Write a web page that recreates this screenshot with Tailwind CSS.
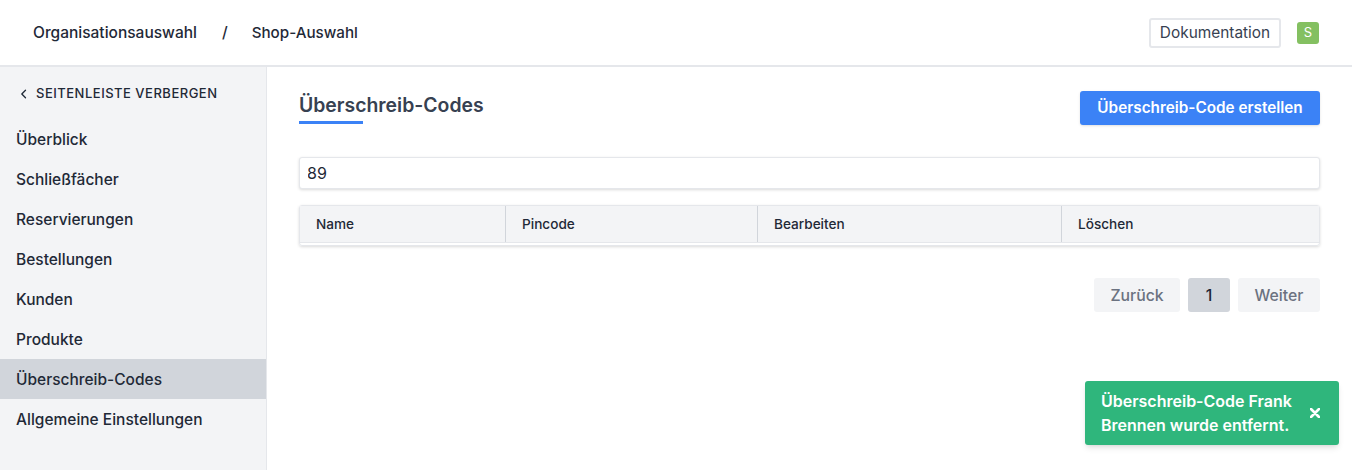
<!DOCTYPE html>
<html lang="de">
  <head>
    <meta charset="UTF-8" />
    <meta name="viewport" content="width=device-width, initial-scale=1.0" />
    <title>Überschreib-Codes</title>
    <script src="https://cdn.jsdelivr.net/npm/@tailwindcss/browser@4"></script>
  </head>
  <body class="bg-white font-['Inter',sans-serif] text-[#1f2937] overflow-hidden">
    <div class="relative w-[1352px] h-[470px] overflow-hidden">
      <header class="h-[67px] border-b-2 border-[#e5e7eb] flex items-center justify-between pl-[33px] pr-[33px]">
        <nav class="flex items-center pt-[1px] text-[15.5px] font-medium text-[#1f2937]">
          <a>Organisationsauswahl</a>
          <span class="ml-[25px] mr-[24px]">/</span>
          <a class="text-[15.2px]">Shop-Auswahl</a>
        </nav>
        <div class="flex items-center">
          <button class="h-[30px] w-[132px] border-2 border-[#e5e7eb] rounded-[3px] text-[15.4px] text-[#374151] flex items-center justify-center">Dokumentation</button>
          <div class="ml-[16px] w-[22px] h-[22px] rounded-[3px] bg-[#84c061] text-white text-[13px] flex items-center justify-center">S</div>
        </div>
      </header>
      <div class="flex h-[403px]">
        <aside class="w-[267px] shrink-0 bg-[#f3f4f6] border-r border-[#e5e7eb]">
          <button class="flex items-center h-[52px] pl-[17px] pt-[1px] text-[13px] font-medium tracking-[0.5px] text-[#1f2937]">
            <svg class="w-[14px] h-[14px] mr-[5px]" viewBox="0 0 14 14" fill="none" stroke="currentColor" stroke-width="1.3" stroke-linecap="round" stroke-linejoin="round"><path d="M8.5 3.2 4.8 7l3.7 3.8" /></svg>
            SEITENLEISTE VERBERGEN
          </button>
          <ul class="text-[15.5px] font-medium text-[#1f2937]">
            <li class="h-[40px] pl-4 pt-[1px] flex items-center">Überblick</li>
            <li class="h-[40px] pl-4 pt-[1px] flex items-center">Schließfächer</li>
            <li class="h-[40px] pl-4 pt-[1px] flex items-center">Reservierungen</li>
            <li class="h-[40px] pl-4 pt-[1px] flex items-center">Bestellungen</li>
            <li class="h-[40px] pl-4 pt-[1px] flex items-center">Kunden</li>
            <li class="h-[40px] pl-4 pt-[1px] flex items-center">Produkte</li>
            <li class="h-[40px] pl-4 pt-[1px] flex items-center bg-[#d1d5db]">Überschreib-Codes</li>
            <li class="h-[40px] pl-4 pt-[1px] flex items-center">Allgemeine Einstellungen</li>
          </ul>
        </aside>
        <main class="flex-1 pl-[32px] pr-[32px]">
          <div class="flex items-start justify-between pt-[24px]">
            <h1 class="text-[19.4px] leading-[29px] font-semibold text-[#374151] pb-[3px] relative">
              Überschreib-Codes
              <span class="absolute left-0 bottom-[-1px] w-[64px] h-[3px] bg-[#3b82f6]"></span>
            </h1>
            <button class="h-[34px] w-[240px] pt-[1px] bg-[#3b82f6] text-white text-[15.3px] font-semibold rounded-[3px] shadow-sm">Überschreib-Code erstellen</button>
          </div>
          <input value="89" class="block mt-[32px] w-full h-[32px] px-[8px] bg-white border border-[#e5e7eb] rounded-[3px] shadow-[0_1px_3px_rgba(0,0,0,0.15)] text-[16px] text-[#1f2937] indent-[-1px]" />
          <div class="mt-[16px] border border-[#e5e7eb] rounded-[3px] shadow-[0_1px_3px_rgba(0,0,0,0.15)] pb-[2px]">
            <div class="grid grid-cols-[206px_252px_304px_1fr] h-[37px] bg-[#f3f4f6] border-b border-[#e5e7eb] text-[13.6px] font-medium text-[#1f2937]">
              <div class="pl-[16px] pt-[1px] flex items-center border-r border-[#d1d5db]">Name</div>
              <div class="pl-[16px] pt-[1px] flex items-center border-r border-[#d1d5db]">Pincode</div>
              <div class="pl-[16px] pt-[1px] flex items-center border-r border-[#d1d5db]">Bearbeiten</div>
              <div class="pl-[16px] pt-[1px] flex items-center">Löschen</div>
            </div>
          </div>
          <div class="flex justify-end gap-2 mt-[32px] text-[15.8px] font-medium">
            <button class="h-[34px] w-[86px] pt-[1px] bg-[#f3f4f6] text-[#6b7280] rounded-[3px]">Zurück</button>
            <button class="h-[34px] w-[42px] pt-[1px] bg-[#d1d5db] text-[#1f2937] rounded-[3px]">1</button>
            <button class="h-[34px] w-[82px] pt-[1px] bg-[#f3f4f6] text-[#6b7280] rounded-[3px]">Weiter</button>
          </div>
        </main>
      </div>
      <div class="absolute left-[1085px] top-[381px] w-[254px] h-[64px] bg-[#2fb67c] rounded-[3px] shadow-md flex items-center justify-between pl-[16px] pr-[19px] text-white text-[16px] leading-[24px] font-semibold">
        <span>Überschreib-Code Frank<br />Brennen wurde entfernt.</span>
        <svg class="w-[10px] h-[10px]" viewBox="0 0 10 10" fill="none" stroke="currentColor" stroke-width="2.6" stroke-linecap="round"><path d="M1 1l8 8M9 1l-8 8" /></svg>
      </div>
    </div>
  </body>
</html>
